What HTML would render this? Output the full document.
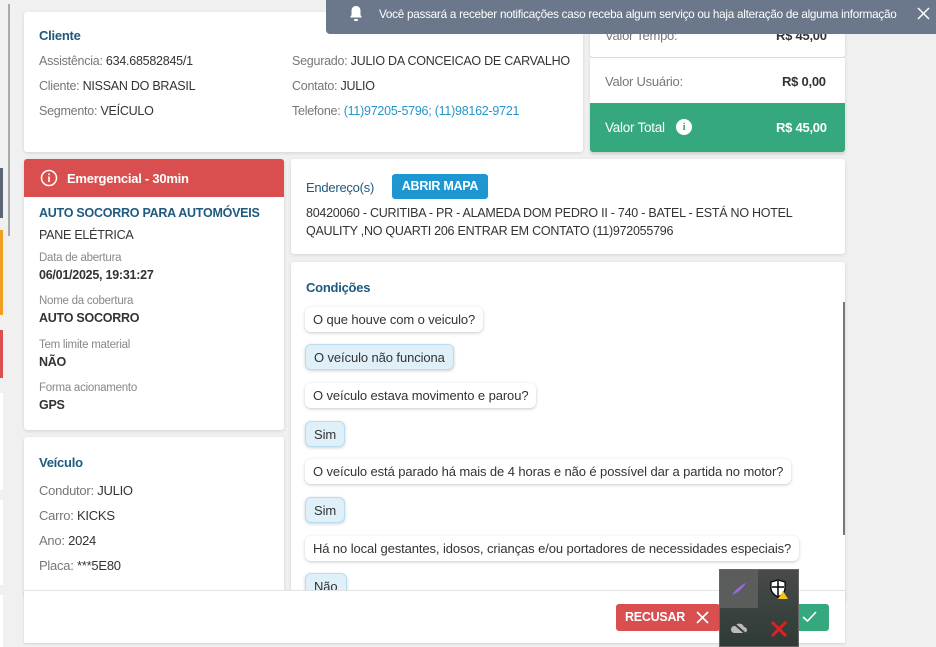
<!DOCTYPE html>
<html><head><meta charset="utf-8"><style>
*{box-sizing:border-box;margin:0;padding:0}
body{width:936px;height:647px;background:#f0f0f0;font-family:"Liberation Sans",sans-serif;font-size:12.5px;letter-spacing:-0.25px;color:#333;position:relative;overflow:hidden}
.a{position:absolute;white-space:nowrap}
.card{position:absolute;background:#fff;border-radius:3px;box-shadow:0 1px 3px rgba(0,0,0,.12)}
.lb{color:#777}
.t{color:#1e5a80;font-weight:bold}
.blue{color:#2596c8}
.q{position:absolute;left:305px;height:25px;line-height:25px;padding:0 8px;background:#fff;border-radius:6px;box-shadow:0 1px 3px rgba(0,0,0,.22);white-space:nowrap;color:#333;font-size:13px;letter-spacing:-0.1px}
.r{position:absolute;left:305px;height:26px;line-height:26px;padding:0 8px;background:#dff0f9;border:1px solid #b9dcef;border-radius:6px;box-shadow:0 1px 3px rgba(0,0,0,.18);white-space:nowrap;color:#333;font-size:13px;letter-spacing:-0.1px}
.sm{font-size:11.5px;color:#888}
.bd{font-weight:bold;color:#333}
</style></head><body>
<div class="a" style="left:8px;top:4px;width:2px;height:232px;background:#aaa"></div>
<div class="a" style="left:0;top:168px;width:3px;height:50px;background:#5b6573"></div>
<div class="a" style="left:0;top:230px;width:3px;height:85px;background:#f0a020"></div>
<div class="a" style="left:0;top:330px;width:3px;height:48px;background:#d94f4f"></div>
<div class="a" style="left:0;top:393px;width:3px;height:97px;background:#fff"></div>
<div class="a" style="left:0;top:500px;width:3px;height:85px;background:#fff"></div>
<div class="a" style="left:0;top:595px;width:3px;height:52px;background:#fff"></div>

<div class="card" style="left:24px;top:12px;width:559px;height:140px"></div>
<div class="a t" style="left:39px;top:28px;font-size:13px">Cliente</div>
<div class="a" style="left:39px;top:54px"><span class="lb">Assistência:</span> 634.68582845/1</div>
<div class="a" style="left:39px;top:79px"><span class="lb">Cliente:</span> NISSAN DO BRASIL</div>
<div class="a" style="left:39px;top:104px"><span class="lb">Segmento:</span> VEÍCULO</div>
<div class="a" style="left:292px;top:54px"><span class="lb">Segurado:</span> JULIO DA CONCEICAO DE CARVALHO</div>
<div class="a" style="left:292px;top:79px"><span class="lb">Contato:</span> JULIO</div>
<div class="a" style="left:292px;top:104px"><span class="lb">Telefone:</span> <span class="blue">(11)97205-5796; (11)98162-9721</span></div>

<div class="card" style="left:590px;top:12px;width:255px;height:45px"></div>
<div class="a lb" style="left:605px;top:28px;font-size:13px">Valor Tempo:</div>
<div class="a bd" style="left:776px;top:28px;font-size:13px">R$ 45,00</div>
<div class="card" style="left:590px;top:58px;width:255px;height:46px;border-radius:0"></div>
<div class="a lb" style="left:605px;top:74px;font-size:13px">Valor Usuário:</div>
<div class="a bd" style="left:782px;top:74px;font-size:13px">R$ 0,00</div>
<div class="a" style="left:590px;top:103px;width:255px;height:49px;background:#35a87e;border-radius:0 0 3px 3px;box-shadow:0 2px 3px rgba(0,0,0,.15)"></div>
<div class="a" style="left:605px;top:120px;color:#fff;font-size:13.5px">Valor Total</div>
<div class="a" style="left:676px;top:119px;width:16px;height:16px;border-radius:50%;background:#fff;color:#35a87e;font-weight:bold;font-size:11px;text-align:center;line-height:16px;font-family:'Liberation Serif',serif">i</div>
<div class="a" style="left:776px;top:120px;color:#fff;font-weight:bold;font-size:13px">R$ 45,00</div>

<div class="a" style="left:326px;top:0;width:610px;height:34px;background:#6b778a;border-radius:0 0 0 4px"></div>
<svg class="a" style="left:349px;top:5px" width="14" height="17" viewBox="0 0 14 17"><path d="M7 1c-3 0-4.5 2.2-4.5 5v4L1 12.5h12L11.5 10V6C11.5 3.2 10 1 7 1z" fill="#fff"/><rect x="5" y="14" width="4" height="2" rx="1" fill="#fff"/></svg>
<div class="a" style="left:379px;top:8px;color:#fff;font-size:11.7px">Você passará a receber notificações caso receba algum serviço ou haja alteração de alguma informação</div>
<svg class="a" style="left:917px;top:7px" width="13" height="13" viewBox="0 0 13 13"><path d="M1 1L12 12M12 1L1 12" stroke="#fff" stroke-width="1.5"/></svg>

<div class="card" style="left:24px;top:159px;width:260px;height:271px"></div>
<div class="a" style="left:24px;top:159px;width:260px;height:38px;background:#d94f4f;border-radius:3px 3px 0 0"></div>
<svg class="a" style="left:40px;top:169px" width="18" height="18" viewBox="0 0 18 18"><circle cx="9" cy="9" r="7.5" fill="none" stroke="#fff" stroke-width="1.5"/><rect x="8.2" y="7.5" width="1.6" height="5.5" fill="#fff"/><rect x="8.2" y="4.5" width="1.6" height="1.7" fill="#fff"/></svg>
<div class="a" style="left:67px;top:171px;color:#fff;font-weight:bold;font-size:13px">Emergencial - 30min</div>
<div class="a t" style="left:39px;top:206px;font-size:12.5px">AUTO SOCORRO PARA AUTOMÓVEIS</div>
<div class="a" style="left:39px;top:228px">PANE ELÉTRICA</div>
<div class="a sm" style="left:39px;top:252px">Data de abertura</div>
<div class="a bd" style="left:39px;top:268px">06/01/2025, 19:31:27</div>
<div class="a sm" style="left:39px;top:295px">Nome da cobertura</div>
<div class="a bd" style="left:39px;top:311px">AUTO SOCORRO</div>
<div class="a sm" style="left:39px;top:339px">Tem limite material</div>
<div class="a bd" style="left:39px;top:355px">NÃO</div>
<div class="a sm" style="left:39px;top:382px">Forma acionamento</div>
<div class="a bd" style="left:39px;top:398px">GPS</div>

<div class="card" style="left:24px;top:437px;width:260px;height:160px"></div>
<div class="a t" style="left:39px;top:455px;font-size:13px">Veículo</div>
<div class="a" style="left:39px;top:483px;font-size:13px"><span class="lb">Condutor:</span> JULIO</div>
<div class="a" style="left:39px;top:508px;font-size:13px"><span class="lb">Carro:</span> KICKS</div>
<div class="a" style="left:39px;top:533px;font-size:13px"><span class="lb">Ano:</span> 2024</div>
<div class="a" style="left:39px;top:558px;font-size:13px"><span class="lb">Placa:</span> ***5E80</div>

<div class="card" style="left:291px;top:159px;width:554px;height:95px"></div>
<div class="a" style="left:306px;top:180px;color:#1e5a80;font-size:13px">Endereço(s)</div>
<div class="a" style="left:392px;top:174px;width:96px;height:25px;background:#1e96d2;border-radius:3px;color:#fff;font-weight:bold;text-align:center;line-height:25px;font-size:12.5px">ABRIR MAPA</div>
<div class="a" style="left:306px;top:206px">80420060 - CURITIBA - PR - ALAMEDA DOM PEDRO II - 740 - BATEL - ESTÁ NO HOTEL</div>
<div class="a" style="left:306px;top:224px">QAULITY ,NO QUARTI 206 ENTRAR EM CONTATO (11)972055796</div>

<div class="card" style="left:291px;top:262px;width:554px;height:340px"></div>
<div class="a t" style="left:306px;top:280px;font-size:13px">Condições</div>
<div class="a" style="left:843px;top:302px;width:2px;height:233px;background:#777"></div>
<div class="q" style="top:307px">O que houve com o veiculo?</div>
<div class="r" style="top:344px">O veículo não funciona</div>
<div class="q" style="top:383px">O veículo estava movimento e parou?</div>
<div class="r" style="top:421px">Sim</div>
<div class="q" style="top:459px">O veículo está parado há mais de 4 horas e não é possível dar a partida no motor?</div>
<div class="r" style="top:497px">Sim</div>
<div class="q" style="top:536px">Há no local gestantes, idosos, crianças e/ou portadores de necessidades especiais?</div>
<div class="r" style="top:573px">Não</div>

<div class="a" style="left:24px;top:590px;width:821px;height:53px;background:#fff;border-top:1px solid #e4e4e4;box-shadow:0 1px 2px rgba(0,0,0,.12)"></div>
<div class="a" style="left:616px;top:604px;width:104px;height:27px;background:#d94f4f;border-radius:3px"></div>
<div class="a" style="left:625px;top:610px;color:#fff;font-weight:bold;font-size:12.5px">RECUSAR</div>
<svg class="a" style="left:696px;top:611px" width="13" height="13" viewBox="0 0 13 13"><path d="M1 1L12 12M12 1L1 12" stroke="#fff" stroke-width="1.6"/></svg>
<div class="a" style="left:790px;top:604px;width:39px;height:27px;background:#35a87e;border-radius:3px"></div>
<svg class="a" style="left:802px;top:610px" width="15" height="13" viewBox="0 0 15 13"><path d="M1 7L5.5 11L14 2" stroke="#fff" stroke-width="1.6" fill="none"/></svg>

<div class="a" style="left:719px;top:569px;width:80px;height:78px;background:linear-gradient(#474a49,#2f3b36);border:1px solid #666"></div>
<div class="a" style="left:720px;top:570px;width:38px;height:38px;background:#5a5d5c"></div>
<svg class="a" style="left:729px;top:579px" width="20" height="20" viewBox="0 0 20 20"><path d="M3 16C7 10 12 6 17 4C14 9 10 13 3 16z" fill="#9a6ad8"/></svg>
<svg class="a" style="left:769px;top:578px" width="22" height="22" viewBox="0 0 22 22"><path d="M9 2L16 4V10C16 14 13 17 9 19C5 17 2 14 2 10V4z" fill="#fff" stroke="#000" stroke-width="1.2"/><path d="M9 3V18M3 9H15" stroke="#000" stroke-width="1.5"/><path d="M14 13L19 21H9z" fill="#f5c518"/></svg>
<svg class="a" style="left:729px;top:620px" width="20" height="16" viewBox="0 0 20 16"><path d="M5 13H15A3 3 0 0 0 15 7A5 5 0 0 0 6 6A3.5 3.5 0 0 0 5 13z" fill="#bbb"/><path d="M2 1L18 15" stroke="#3a3d3c" stroke-width="2"/></svg>
<svg class="a" style="left:769px;top:620px" width="20" height="18" viewBox="0 0 20 18"><path d="M3 2L17 16M17 2L3 16" stroke="#e02020" stroke-width="3"/></svg>
</body></html>
